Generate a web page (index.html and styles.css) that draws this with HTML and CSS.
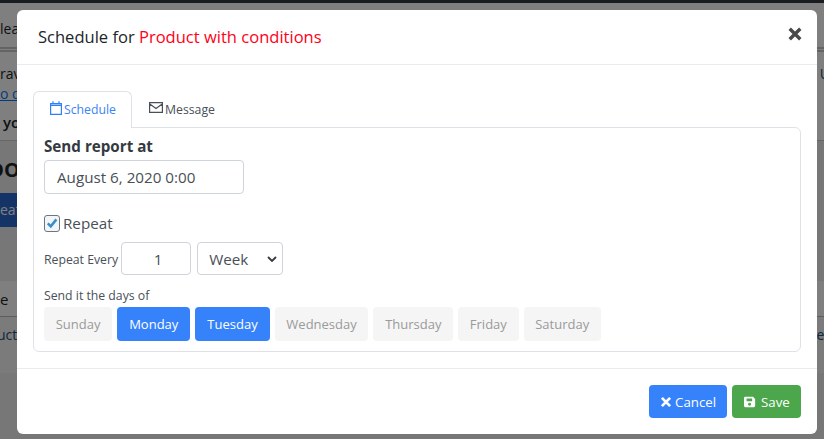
FILE: index.html
```html
<!DOCTYPE html>
<html lang="en">
<head>
<meta charset="utf-8">
<title>Schedule</title>
<link rel="stylesheet" href="styles.css">
</head>
<body>
<div class="page">
  <div class="topbar"></div>
  <div class="row r1">leas</div>
  <div class="row r2">
    <div class="t1"><span>rav</span><span class="edge">U</span></div>
    <div class="t2"><a>o di</a></div>
    <div class="t3">yo</div>
  </div>
  <div class="row r3"><b class="big">OOO</b></div>
  <div class="row r4"><span class="bluebtn">eat</span></div>
  <div class="row r5">e</div>
  <div class="row r6"><span class="uct">uct</span><span class="edge">er</span></div>
</div>
<div class="overlay"></div>
<div class="modal">
  <header class="modal-head">
    <h5 class="modal-title">Schedule for <span class="red">Product with conditions</span></h5>
    <svg class="close" viewBox="0 0 14 14"><path d="M1.700 1.700 12.300 12.300M12.300 1.700 1.700 12.300" stroke="#4a4a4a" stroke-width="3.400" fill="none"/></svg>
  </header>
  <section class="modal-body">
    <nav class="tabs">
      <div class="tab active">
        <svg class="ico" viewBox="0 0 12 14"><path d="M.6 2.600h10.800v10.800H.6zM.6 4.300h10.800M3 .3v2.500M9 .3v2.500" fill="none" stroke="#2f7ff7" stroke-width="1.200"/></svg><span>Schedule</span>
      </div>
      <div class="tab">
        <svg class="ico mail" viewBox="0 0 14 11"><path d="M.6.6h12.800v9.800H.6zM.8 2l6.200 4.600L13.200 2" fill="none" stroke="#495057" stroke-width="1.200"/></svg><span>Message</span>
      </div>
    </nav>
    <div class="pane">
      <label class="strong">Send report at</label>
      <div class="input date">August 6, 2020 0:00</div>
      <div class="check">
        <span class="box"><svg viewBox="0 0 12 12"><path d="M1.800 6.300 4.800 9.400 10.400 2.400" fill="none" stroke="#3b8fc9" stroke-width="2.600"/></svg></span>
        <span>Repeat</span>
      </div>
      <div class="every">
        <span class="small every-label">Repeat Every</span>
        <div class="input num">1</div>
        <div class="input sel"><span>Week</span><svg viewBox="0 0 10 6"><path d="M1 1 5 5 9 1" fill="none" stroke="#343a40" stroke-width="1.800"/></svg></div>
      </div>
      <div class="small days-label">Send it the days of</div>
      <div class="days">
        <span class="day">Sunday</span>
        <span class="day on">Monday</span>
        <span class="day on">Tuesday</span>
        <span class="day">Wednesday</span>
        <span class="day">Thursday</span>
        <span class="day">Friday</span>
        <span class="day">Saturday</span>
      </div>
    </div>
  </section>
  <footer class="modal-foot">
    <button class="btn blue"><svg viewBox="0 0 14 14"><path d="M2.200 2.200 11.800 11.800M11.800 2.200 2.200 11.800" stroke="#fff" stroke-width="3.200" fill="none"/></svg>Cancel</button>
    <button class="btn green"><svg viewBox="0 0 14 14"><path fill-rule="evenodd" d="M1.500 1h9L13 3.500v8A1.500 1.500 0 0 1 11.500 13h-10A1.500 1.500 0 0 1 0 11.500v-9A1.500 1.500 0 0 1 1.500 1zM3 3v3h6.500V3zM6.500 7.800a1.800 1.800 0 1 0 .01 0z" fill="#fff"/></svg>Save</button>
  </footer>
</div>
</body>
</html>
```
FILE: styles.css
```css
* { box-sizing: border-box; }
html, body { margin: 0; padding: 0; }
body {
  width: 824px;
  height: 439px;
  overflow: hidden;
  position: relative;
  font-family: "Open Sans", "Noto Sans", sans-serif;
  color: #495057;
  background: #eee;
}
.page { width: 824px; height: 439px; background: #eee; font-size: 14px; color: #212529; }
.topbar { height: 3px; background: #343a40; }
.row { white-space: nowrap; overflow: hidden; }
.r1 { height: 49px; padding-top: 16px; line-height: 20px; background: #fff; border-bottom: 5px double #c8c8c8; }
.r2 { height: 89px; padding-top: 12px; background: #fff; border-bottom: 1px solid #ccc; }
.t1 { display: flex; justify-content: space-between; line-height: 20px; }
.edge { margin-right: -6px; color: #24527a; }
.t2 { line-height: 19px; color: #007bff; text-decoration: underline; }
.t3 { margin-top: 9px; line-height: 20px; font-size: 15px; font-weight: 600; padding-left: 3px; }
.r3 { height: 52px; padding-top: 15px; font-size: 20px; line-height: 28px; }
.big { margin-left: -12px; }
.r4 { height: 88px; }
.bluebtn { display: block; width: 30px; height: 34px; line-height: 34px; background: #2968cf; color: #fff; }
.r5 { height: 36px; padding-top: 8px; line-height: 20px; font-size: 15px; background: #fff; border-bottom: 1px solid #bbb; }
.r6 { height: 56px; padding-top: 8px; line-height: 20px; background: #f6f6f6; color: #24527a; display: flex; justify-content: space-between; }
.uct { margin-left: -3px; }
.overlay { position: absolute; inset: 0; background: rgba(0, 0, 0, .5); }
.modal {
  position: absolute;
  left: 17px;
  top: 10px;
  width: 800px;
  height: 424px;
  background: #fff;
  border-radius: 6px;
  display: flex;
  flex-direction: column;
}
.modal-head {
  height: 55px;
  flex: none;
  border-bottom: 1px solid #e9ecef;
  padding: 0 15px 0 21px;
  display: flex;
  align-items: center;
  justify-content: space-between;
}
.modal-title { margin: 0; font-size: 16.550px; font-weight: 500; color: #212529; line-height: 56px; }
.red { color: #ff0018; }
.close { width: 14px; height: 14px; margin-top: -6px; flex: none; }
.modal-body { flex: 1; padding: 26px 16px 16px; }
.tabs { display: flex; height: 36px; }
.tab {
  width: 99px;
  height: 37px;
  display: flex;
  align-items: center;
  padding: 0 16px;
  font-size: 12.250px;
  color: #495057;
  position: relative;
  z-index: 1;
}
.tab + .tab { padding-left: 17px; }
.tab.active {
  color: #3b82f6;
  background: #fff;
  border: 1px solid #dee2e6;
  border-bottom: 0;
  border-radius: 6px 6px 0 0;
}
.tab span { margin-top: -1px; }
.ico { width: 12px; height: 14px; margin-right: 2px; margin-top: -4px; flex: none; }
.ico.mail { width: 14px; height: 11px; margin-right: 2px; }
.pane {
  height: 225px;
  border: 1px solid #dee2e6;
  border-radius: 0 6px 6px 6px;
  padding: 8px 10px;
}
.strong { display: block; font-size: 15.200px; font-weight: 700; color: #343a40; line-height: 20px; }
.input {
  background: #fff;
  border: 1px solid #ced4da;
  border-radius: 4px;
  color: #495057;
  font-size: 15.200px;
  display: flex;
  align-items: center;
}
.date { width: 200px; height: 34px; margin-top: 4px; padding-left: 12px; }
.check { display: flex; align-items: center; gap: 3px; margin-top: 19px; height: 20px; font-size: 15.200px; }
.box {
  width: 16px;
  height: 17px;
  border: 1px solid #6b7680;
  border-radius: 3px;
  display: flex;
  align-items: center;
  justify-content: center;
  background: #f3f6f9;
}
.box svg { width: 12px; height: 12px; }
.every { display: flex; align-items: center; gap: 3px; margin-top: 9px; height: 33px; }
.every-label { padding-top: 3px; }
.small { font-size: 12.250px; color: #495057; line-height: 16px; }
.num { width: 70px; height: 33px; justify-content: center; padding-left: 4px; }
.sel { width: 86px; height: 33px; margin-left: 3px; padding: 0 5px 0 11px; justify-content: space-between; }
.sel svg { width: 10px; height: 6px; flex: none; }
.days-label { margin-top: 13px; }
.days { display: flex; gap: 5px; margin-top: 3px; }
.day {
  height: 34px;
  padding: 0 11.700px;
  display: flex;
  align-items: center;
  background: #f5f5f5;
  color: #9a9a9a;
  font-size: 13px;
  border-radius: 4px;
}
.day.on { background: #3582fa; color: #fff; font-weight: 500; padding: 0 12px; }
.modal-foot {
  height: 66px;
  flex: none;
  border-top: 1px solid #e9ecef;
  padding: 16px 16px 0 0;
  display: flex;
  justify-content: flex-end;
  gap: 5px;
}
.btn {
  height: 33px;
  border: 0;
  border-radius: 4px;
  color: #fff;
  font: 13.300px "Open Sans", "Noto Sans", sans-serif;
  display: flex;
  align-items: center;
  gap: 3px;
  padding: 0 11px;
}
.btn svg { width: 12px; height: 12px; flex: none; }
.blue { background: #3582fa; width: 78px; }
.green { background: #4ca64c; width: 69px; gap: 5px; padding-left: 12px; }
```
